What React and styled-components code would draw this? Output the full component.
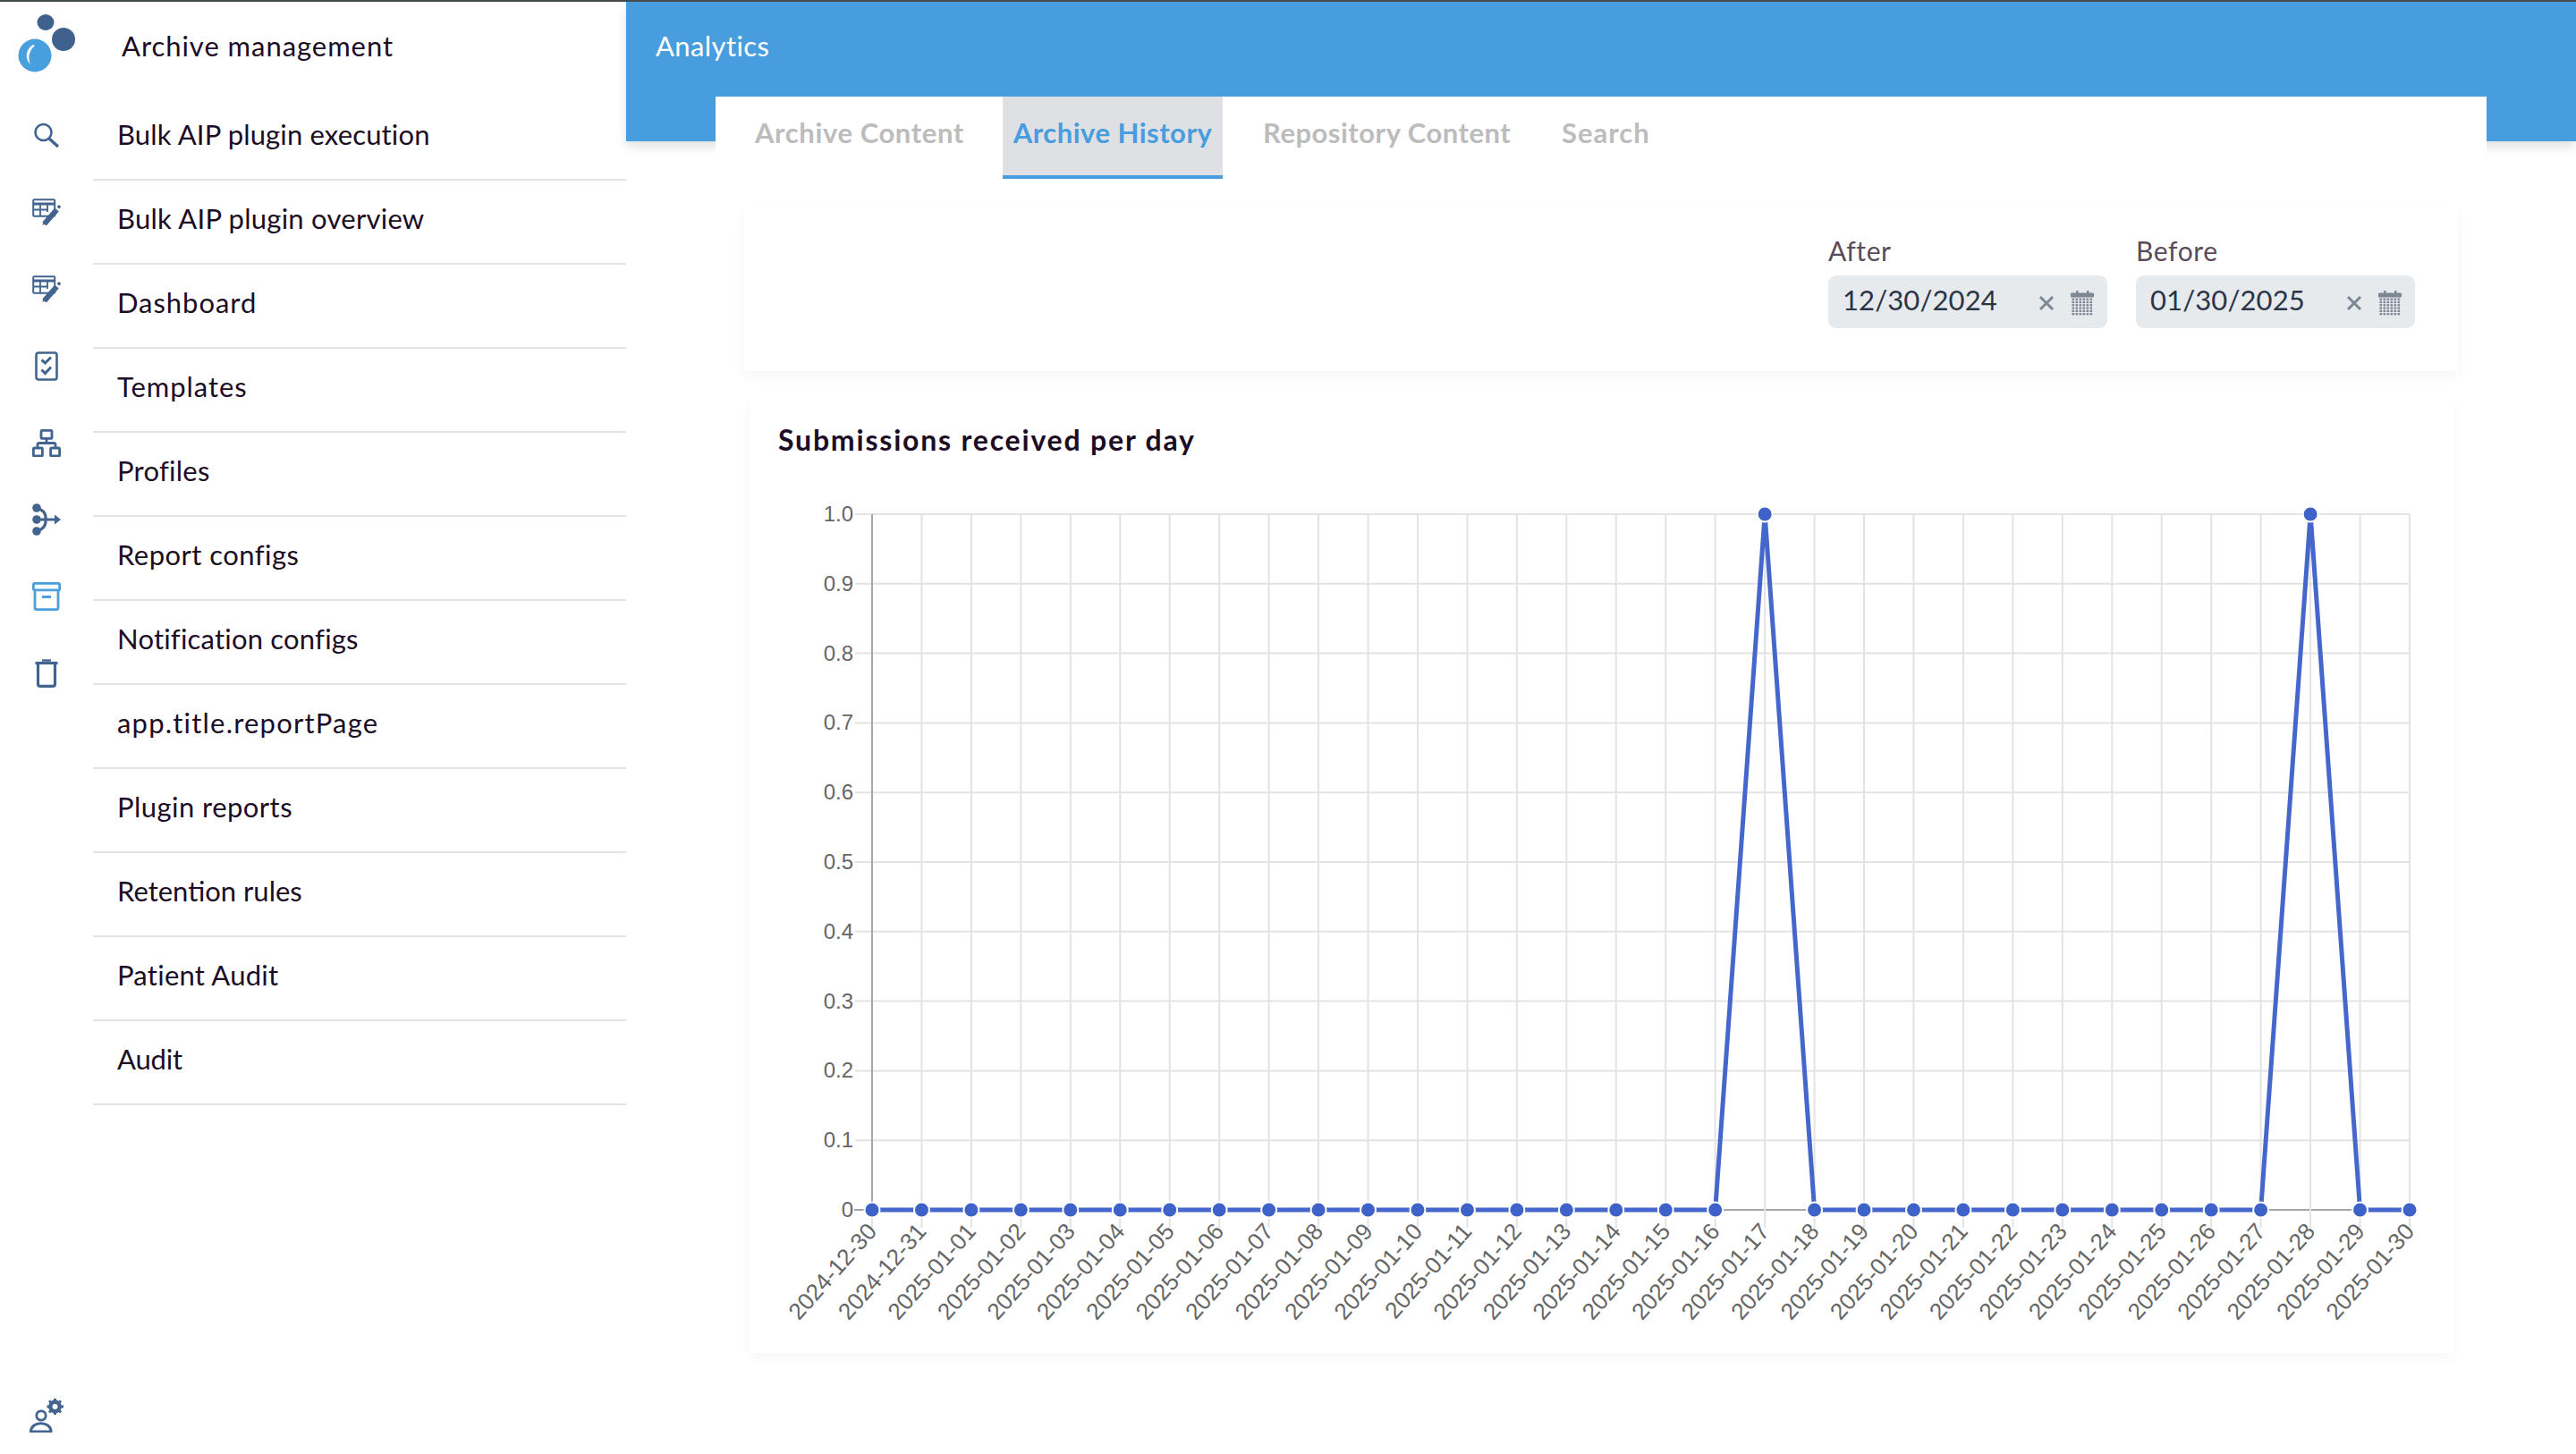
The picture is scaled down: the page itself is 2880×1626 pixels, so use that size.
import React from "react";
import styled, { createGlobalStyle } from "styled-components";

const Global = createGlobalStyle`
  html, body { margin: 0; padding: 0; background: #fff; }
  body { font-family: Lato, "Noto Sans", sans-serif; }
`;

const Page = styled.div`
  width: 2880px; height: 1626px; overflow: hidden;
  border-top: 2px solid #454a4a; box-sizing: border-box;
  display: flex; background: #fff;
`;
const Sidebar = styled.aside`
  width: 700px; flex: none; display: flex; background: #fff;
`;
const Rail = styled.div`
  width: 104px; flex: none; display: flex; flex-direction: column; color: #42648f;
`;
const LogoBox = styled.div`
  height: 106px; flex: none; padding-left: 20px; padding-top: 10px; box-sizing: border-box;
`;
const IconSlot = styled.div`
  height: 86px; flex: none; display: flex; align-items: center; justify-content: center;
  box-sizing: border-box;
  color: ${p => (p.$active ? "#4a9fdf" : "#42648f")};
`;
const BottomSlot = styled.div`
  margin-top: auto; padding: 0 0 24px 33px;
  svg { display: block; }
`;
const Nav = styled.nav`
  flex: 1; display: flex; flex-direction: column; color: #1c0d24;
`;
const NavTitle = styled.div`
  height: 106px; box-sizing: border-box; padding: 28px 0 0 32px;
  font-size: 31px; line-height: 42px; letter-spacing: 0.95px;
`;
const NavRow = styled.div`
  height: 94px; box-sizing: border-box; border-bottom: 2px solid #e4e4e4;
  padding: 21px 0 0 27px;
  font-size: 31px; line-height: 42px; letter-spacing: ${p => p.$track}px;
`;
const Main = styled.main`
  flex: 1; min-width: 0; display: flex; flex-direction: column;
`;
const Header = styled.header`
  height: 156px; flex: none; background: #479ddd; color: #fff; box-sizing: border-box;
  padding: 28px 0 0 33px; font-size: 31px; line-height: 42px; letter-spacing: 0.4px;
  box-shadow: 0 6px 12px rgba(0, 0, 0, 0.12);
`;
const Panel = styled.section`
  position: relative; margin: -50px 100px 0 100px; background: #fff; flex: 1;
  display: flex; flex-direction: column;
`;
const Tabs = styled.div`
  height: 92px; flex: none; display: flex; padding-left: 44px;
`;
const Tab = styled.div`
  box-sizing: border-box; height: 92px; padding-top: 19px;
  margin-left: ${p => p.$ml || 0}px; width: ${p => p.$w}px;
  text-align: ${p => (p.$active ? "center" : "left")};
  font-size: 31px; line-height: 42px; font-weight: 700; letter-spacing: ${p => p.$track}px;
  color: ${p => (p.$active ? "#479ddd" : "#bcbcbc")};
  background: ${p => (p.$active ? "#dfe0e4" : "transparent")};
  border-bottom: ${p => (p.$active ? "4px solid #479ddd" : "none")};
  white-space: nowrap;
`;
const FilterCard = styled.div`
  margin: 33px 32px 0; height: 182px; box-sizing: border-box; flex: none;
  box-shadow: 0 6px 14px rgba(0, 0, 0, 0.045);
  display: flex; justify-content: flex-end; gap: 32px; padding: 27px 48px 0 0;
`;
const Field = styled.div`
  width: 312px; display: flex; flex-direction: column;
`;
const FieldLabel = styled.label`
  height: 48px; font-size: 30px; line-height: 40px; letter-spacing: 0.6px; color: #5b4a5a;
`;
const DateBox = styled.div`
  height: 59px; border-radius: 9px; background: #e7eaed; display: flex; align-items: center;
  padding: 0 15px 0 16px; box-sizing: border-box; color: #2b3447;
`;
const DateText = styled.span`
  flex: 1; font-size: 31px; line-height: 50px; margin-top: -6px; letter-spacing: 0.1px;
`;
const DateIcons = styled.div`
  display: flex; align-items: center; gap: 18px; color: #7d8693; margin-top: 2px;
  svg { display: block; }
`;
const ChartCard = styled.div`
  margin: 32px 37px 0 38px; height: 1066px; flex: none; box-sizing: border-box;
  box-shadow: 0 6px 14px rgba(0, 0, 0, 0.035);
  display: flex; flex-direction: column;
`;
const ChartTitle = styled.h2`
  margin: 0; height: 93px; box-sizing: border-box; padding: 24px 0 0 32px;
  font-size: 32px; line-height: 42px; font-weight: 700; letter-spacing: 1.8px; color: #1c0d24;
`;
const ChartSvg = styled.svg`
  display: block; width: 1905px; height: 973px;
  text { font-family: "Liberation Sans", Arial, sans-serif; fill: #666; }
`;

const Logo = () => (
  <svg width="66" height="72" viewBox="20 12 66 72">
    <ellipse cx="51" cy="25" rx="9.5" ry="9" fill="#40618e" />
    <circle cx="71" cy="44" r="13" fill="#40618e" />
    <circle cx="39" cy="62" r="18.5" fill="#47a0dd" />
    <path d="M37 50 C29 55 27 65 34 72 C31 65 32 57 39 51 Z" fill="#fff" />
  </svg>
);
const SearchIcon = () => (
  <svg width="30" height="28" viewBox="0 0 30 28" fill="none" stroke="currentColor">
    <circle cx="11.5" cy="11" r="9" strokeWidth="2.6" />
    <path d="M18 18 L28 27" strokeWidth="3.4" />
  </svg>
);
const TableEditIcon = () => (
  <svg width="32" height="30" viewBox="0 0 32 30" fill="none" stroke="currentColor">
    <rect x="1.2" y="1.2" width="24" height="18.5" rx="1" strokeWidth="2" />
    <path d="M1 6 H25.5" strokeWidth="3" />
    <path d="M1 12.5 H18 M9 6 V19 M17 6 V15" strokeWidth="1.8" />
    <path d="M13.5 28.5 L27.5 12.5" strokeWidth="6" stroke="currentColor" />
    <path d="M29 10.5 L31 8" strokeWidth="3.5" />
    <path d="M11 30 L14 25 L17 27.5 Z" fill="currentColor" stroke="none" />
  </svg>
);
const ChecklistIcon = () => (
  <svg width="26" height="33" viewBox="0 0 26 33" fill="none" stroke="currentColor">
    <rect x="1.5" y="1.5" width="23" height="30" rx="2.5" strokeWidth="2.6" />
    <path d="M7.5 9.5 L11.5 13 L18 6.5" strokeWidth="3" />
    <path d="M7.5 20.5 L11.5 24.5 L18 17.5" strokeWidth="3" />
  </svg>
);
const SitemapIcon = () => (
  <svg width="32" height="31" viewBox="0 0 32 31" fill="none" stroke="currentColor" strokeWidth="2.8">
    <rect x="10" y="1.4" width="12" height="9" rx="1" />
    <rect x="1.4" y="21" width="10" height="9" rx="1" />
    <rect x="20.6" y="21" width="10" height="9" rx="1" />
    <path d="M16 10 V15.5 M6 21 V17 Q6 15.5 8 15.5 H24 Q26 15.5 26 17 V21" />
  </svg>
);
const MergeIcon = () => (
  <svg width="32" height="36" viewBox="0 0 32 36" fill="none" stroke="currentColor">
    <circle cx="5" cy="5" r="4.8" fill="currentColor" stroke="none" />
    <circle cx="5" cy="18" r="4.8" fill="currentColor" stroke="none" />
    <circle cx="5" cy="31" r="4.8" fill="currentColor" stroke="none" />
    <path d="M5 5 Q16 8 15 18 Q16 28 5 31 M5 18 H26" strokeWidth="3.2" />
    <path d="M25 12.5 L32 18 L25 23.5 Z" fill="currentColor" stroke="none" />
  </svg>
);
const ArchiveIcon = () => (
  <svg width="32" height="32" viewBox="0 0 32 32" fill="none" stroke="currentColor" strokeWidth="2.8">
    <rect x="1.4" y="1.4" width="29.2" height="7.5" rx="1.2" />
    <path d="M3 8.8 V28.5 Q3 30.6 5 30.6 H27 Q29 30.6 29 28.5 V8.8" />
    <path d="M11 16.5 H21" strokeWidth="3" />
  </svg>
);
const TrashIcon = () => (
  <svg width="26" height="32" viewBox="0 0 26 32" fill="none" stroke="currentColor" strokeWidth="3.2">
    <path d="M0.5 4.5 H25.5" />
    <path d="M8 1.5 H18" strokeWidth="2.4" />
    <path d="M3.5 5 V28 Q3.5 30.4 6 30.4 H20 Q22.5 30.4 22.5 28 V5" />
  </svg>
);
const UserGearIcon = () => (
  <svg width="40" height="39" viewBox="33 1563 40 39" fill="none" stroke="#42648f">
    <circle cx="46" cy="1583" r="5.2" strokeWidth="2.8" />
    <path d="M34.5 1601 C34.5 1588.5 57 1588.5 57 1601 Z" strokeWidth="3" />
    <circle cx="61.5" cy="1573" r="5.2" strokeWidth="4.4" />
    <path d="M61.5 1564 V1567 M61.5 1579 V1582 M52.5 1573 H55.5 M67.5 1573 H71 M55 1566.5 L57.2 1568.7 M65.8 1577.3 L68 1579.5 M55 1579.5 L57.2 1577.3 M65.8 1568.7 L68 1566.5" strokeWidth="3" />
  </svg>
);
const CloseIcon = () => (
  <svg width="18" height="18" viewBox="0 0 18 18" fill="none" stroke="currentColor" strokeWidth="3">
    <path d="M2 2 L16 16 M16 2 L2 16" />
  </svg>
);
const CalendarIcon = () => {
  const dots = [];
  for (let r = 0; r < 6; r++) for (let c = 0; c < 6; c++)
    dots.push(<rect key={`${r}-${c}`} x={1.5 + c * 4} y={8.5 + r * 3.3} width="2.6" height="2.3" fill="currentColor" />);
  return (
    <svg width="26" height="28" viewBox="0 0 26 28">
      <rect x="0" y="2.5" width="26" height="5" rx="1" fill="currentColor" />
      <rect x="6" y="0" width="2.5" height="3" fill="currentColor" />
      <rect x="18" y="0" width="2.5" height="3" fill="currentColor" />
      {dots}
    </svg>
  );
};

const NAV = [
  ["Bulk AIP plugin execution", 0.15], ["Bulk AIP plugin overview", 0.25], ["Dashboard", 0.95],
  ["Templates", 0.95], ["Profiles", 0.25], ["Report configs", 0.45], ["Notification configs", 0.2],
  ["app.title.reportPage", 1.2], ["Plugin reports", 0.45], ["Retention rules", 0],
  ["Patient Audit", 0.25], ["Audit", -0.15],
];
const RAIL = [
  [SearchIcon], [TableEditIcon], [TableEditIcon], [ChecklistIcon], [SitemapIcon],
  [MergeIcon], [ArchiveIcon, true], [TrashIcon],
];

const LABELS = ["2024-12-30", "2024-12-31"];
for (let d = 1; d <= 30; d++) LABELS.push(`2025-01-${String(d).padStart(2, "0")}`);
const X0 = 975, X1 = 2694, Y0 = 1353, Y1 = 575;
const xAt = i => X0 + (i * (X1 - X0)) / 31;
const yAt = v => Y0 + (Y1 - Y0) * v;
const VALUES = LABELS.map((_, i) => (i === 18 || i === 29 ? 1 : 0));
const BLUE = "#3f62c8";

const Chart = () => (
  <ChartSvg viewBox="838 540 1905 973">
    {Array.from({ length: 11 }, (_, k) => (
      <g key={k}>
        <line x1={k === 0 ? 955 : 956} x2={X1} y1={yAt(k / 10)} y2={yAt(k / 10)}
          stroke={k === 0 ? "#a6a6a6" : "#e3e3e3"} strokeWidth="2" />
        <text x="954" y={yAt(k / 10) + 8} fontSize="24" textAnchor="end">
          {k === 0 ? "0" : k === 10 ? "1.0" : (k / 10).toFixed(1)}
        </text>
      </g>
    ))}
    {LABELS.map((l, i) => (
      <g key={l}>
        <line x1={xAt(i)} x2={xAt(i)} y1={i === 0 ? Y0 : Y1} y2="1373" stroke="#e3e3e3" strokeWidth="2" />
        <text transform={`translate(${xAt(i) + 6.5} 1378) rotate(-48.5)`} fontSize="26" textAnchor="end">{l}</text>
      </g>
    ))}
    <line x1={X0} x2={X0} y1={Y1} y2={Y0} stroke="#a6a6a6" strokeWidth="2" />
    <polyline fill="none" stroke="#4567cc" strokeWidth="5" points={VALUES.map((v, i) => `${xAt(i)},${yAt(v)}`).join(" ")} />
    {VALUES.map((v, i) => (
      <g key={i}>
        <circle cx={xAt(i)} cy={yAt(v)} r="9.5" fill="#fff" />
        <circle cx={xAt(i)} cy={yAt(v)} r="7.5" fill={BLUE} />
      </g>
    ))}
  </ChartSvg>
);

const DateField = ({ label, value }) => (
  <Field>
    <FieldLabel>{label}</FieldLabel>
    <DateBox>
      <DateText>{value}</DateText>
      <DateIcons><CloseIcon /><CalendarIcon /></DateIcons>
    </DateBox>
  </Field>
);

export default function App() {
  return (
    <Page>
      <Global />
      <Sidebar>
        <Rail>
          <LogoBox><Logo /></LogoBox>
          {RAIL.map(([Icon, active], i) => (
            <IconSlot key={i} $active={active}><Icon /></IconSlot>
          ))}
          <BottomSlot><UserGearIcon /></BottomSlot>
        </Rail>
        <Nav>
          <NavTitle>Archive management</NavTitle>
          {NAV.map(([n, t]) => <NavRow key={n} $track={t}>{n}</NavRow>)}
        </Nav>
      </Sidebar>
      <Main>
        <Header>Analytics</Header>
        <Panel>
          <Tabs>
            <Tab $w={232} $track={0.6}>Archive Content</Tab>
            <Tab $w={246} $ml={45} $active $track={0.5}>Archive History</Tab>
            <Tab $w={276} $ml={45} $track={0.5}>Repository Content</Tab>
            <Tab $w={100} $ml={58} $track={1}>Search</Tab>
          </Tabs>
          <FilterCard>
            <DateField label="After" value="12/30/2024" />
            <DateField label="Before" value="01/30/2025" />
          </FilterCard>
          <ChartCard>
            <ChartTitle>Submissions received per day</ChartTitle>
            <Chart />
          </ChartCard>
        </Panel>
      </Main>
    </Page>
  );
}
